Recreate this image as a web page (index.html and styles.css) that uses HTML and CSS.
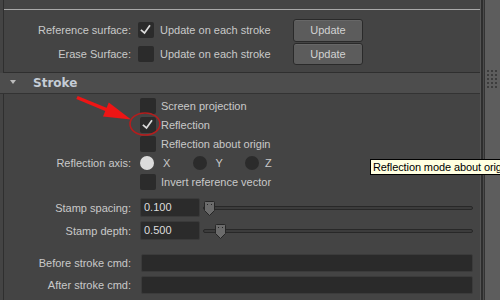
FILE: index.html
```html
<!DOCTYPE html>
<html>
<head>
<meta charset="utf-8">
<link rel="stylesheet" href="styles.css">
</head>
<body>
<div class="window">
  <div class="main">
    <section class="frame top-frame">
      <div class="sep"></div>
      <div class="row top-row">
        <span class="lbl">Reference surface:</span>
        <span class="cb checked"><svg viewBox="0 0 16 16" class="tick"><polyline points="3.5,8.5 6.5,11 11.5,4"/></svg></span>
        <span class="cb-text wide">Update on each stroke</span>
        <button class="btn">Update</button>
      </div>
      <div class="row top-row">
        <span class="lbl">Erase Surface:</span>
        <span class="cb"></span>
        <span class="cb-text wide">Update on each stroke</span>
        <button class="btn">Update</button>
      </div>
    </section>

    <header class="sec-head">
      <span class="tri"></span>
      <span class="sec-title">Stroke</span>
    </header>

    <section class="frame stroke-frame">
      <div class="row r19">
        <span class="lbl"></span>
        <span class="cb"></span>
        <span class="cb-text">Screen projection</span>
      </div>
      <div class="row r19">
        <span class="lbl"></span>
        <span class="cb checked"><svg viewBox="0 0 16 16" class="tick"><polyline points="3.5,8.5 6.5,11 11.5,4"/></svg></span>
        <span class="cb-text">Reflection</span>
      </div>
      <div class="row r19">
        <span class="lbl"></span>
        <span class="cb"></span>
        <span class="cb-text">Reflection about origin</span>
      </div>
      <div class="row r19">
        <span class="lbl">Reflection axis:</span>
        <span class="radio-item"><span class="radio on"></span><span class="radio-text">X</span></span>
        <span class="radio-item"><span class="radio"></span><span class="radio-text">Y</span></span>
        <span class="radio-item"><span class="radio"></span><span class="radio-text z">Z</span></span>
      </div>
      <div class="row r20">
        <span class="lbl"></span>
        <span class="cb"></span>
        <span class="cb-text">Invert reference vector</span>
      </div>

      <div class="row r21 stamp-first">
        <span class="lbl">Stamp spacing:</span>
        <span class="num">0.100</span>
        <span class="slider"><span class="track"></span><svg class="handle" style="left:1px" viewBox="0 0 11 15"><path d="M1.5,0.5 H9.5 Q10.5,0.5 10.5,1.5 V9.5 L5.5,14.5 L0.5,9.5 V1.5 Q0.5,0.5 1.5,0.5 Z"/><rect x="3" y="3" width="1" height="1" class="dot"/><rect x="7" y="3" width="1" height="1" class="dot"/></svg></span>
      </div>
      <div class="row r21 stamp-second">
        <span class="lbl">Stamp depth:</span>
        <span class="num">0.500</span>
        <span class="slider"><span class="track"></span><svg class="handle" style="left:12px" viewBox="0 0 11 15"><path d="M1.5,0.5 H9.5 Q10.5,0.5 10.5,1.5 V9.5 L5.5,14.5 L0.5,9.5 V1.5 Q0.5,0.5 1.5,0.5 Z"/><rect x="3" y="3" width="1" height="1" class="dot"/><rect x="7" y="3" width="1" height="1" class="dot"/></svg></span>
      </div>

      <div class="row r22 cmd-first">
        <span class="lbl">Before stroke cmd:</span>
        <span class="cmd"></span>
      </div>
      <div class="row r22">
        <span class="lbl">After stroke cmd:</span>
        <span class="cmd"></span>
      </div>
    </section>
  </div>
  <div class="gutter"></div>
  <div class="scrollbar">
    <div class="grip">
      <i></i><i></i><i></i><i></i><i></i><i></i><i></i><i></i><i></i><i></i><i></i><i></i><i></i><i></i><i></i>
    </div>
  </div>

  <div class="tooltip">Reflection mode about origin</div>

  <svg class="annot" viewBox="0 0 500 300" width="500" height="300">
    <line x1="77" y1="97.5" x2="107" y2="109.8" class="shaft"/>
    <polygon points="131,119.5 103,116.5 108.8,102.5" class="head"/>
    <ellipse cx="145" cy="124" rx="15" ry="11" class="ring"/>
  </svg>
</div>
</body>
</html>
```

FILE: styles.css
```css
* { box-sizing: border-box; }

html, body {
  margin: 0;
  padding: 0;
  background: #444444;
}

.window {
  position: relative;
  width: 500px;
  height: 300px;
  overflow: hidden;
  display: flex;
  font-family: "Liberation Sans", Arial, sans-serif;
  font-size: 11px;
  color: #c9c9c9;
  background: #444444;
}

.main {
  width: 480px;
  flex: none;
  display: flex;
  flex-direction: column;
}

.frame {
  margin-left: 3px;
  border-left: 1px solid #2f2f2f;
}

.top-frame {
  padding-top: 9px;
  padding-bottom: 6px;
  border-bottom: 1px solid #2f2f2f;
}

.sep {
  height: 1px;
  background: #a8a8a8;
  margin-bottom: 8px;
}

.row {
  display: flex;
  align-items: center;
}

.top-row { height: 24px; }
.r19 { height: 19px; }
.r20 { height: 20px; }
.r21 { height: 21px; }
.r22 { height: 22px; }

.stroke-frame { padding-top: 2px; flex: 1; }
.stamp-first { margin-top: 5px; }
.stamp-second { margin-top: 2px; }
.cmd-first { margin-top: 11px; }

.lbl {
  width: 127px;
  flex: none;
  text-align: right;
  margin-right: 9px;
  white-space: nowrap;
}

.top-row .lbl { margin-right: 7px; }

.cb {
  width: 16px;
  height: 16px;
  flex: none;
  background: #2b2b2b;
  border-radius: 2px;
  display: flex;
  align-items: center;
  justify-content: center;
}

.tick {
  width: 16px;
  height: 16px;
  fill: none;
  stroke: #dcdcdc;
  stroke-width: 1.7;
  stroke-linecap: square;
}

.cb-text {
  margin-left: 5px;
  white-space: nowrap;
}

.top-row .cb-text { margin-left: 6px; }

.cb-text.wide {
  width: 133px;
  flex: none;
}

.btn {
  width: 70px;
  height: 23px;
  margin: 0;
  padding: 0;
  font: inherit;
  color: #d2d2d2;
  background: #5c5c5c;
  border: 1px solid #2a2a2a;
  border-radius: 3px;
  box-shadow: inset 0 1px 0 #676767;
}

.top-row + .top-row .btn { height: 22px; }

.sec-head {
  height: 21px;
  display: flex;
  align-items: center;
  background: #4d4d4d;
  border-bottom: 1px solid #333333;
  padding-left: 10px;
}

.tri {
  width: 0;
  height: 0;
  border-left: 3.5px solid transparent;
  border-right: 3.5px solid transparent;
  border-top: 4px solid #bcbcbc;
  margin-right: 17px;
  margin-top: -3px;
}

.sec-title {
  font-family: "DejaVu Sans", sans-serif;
  font-weight: bold;
  font-size: 12px;
  color: #c4ccd6;
}

.radio-item {
  display: flex;
  align-items: center;
  width: 52.5px;
  flex: none;
}

.radio {
  width: 14px;
  height: 14px;
  border-radius: 50%;
  background: #2b2b2b;
  flex: none;
}

.radio.on { background: #dcdcdc; }

.radio-text { margin-left: 9px; }
.radio-text.z { margin-left: 6px; }

.num {
  width: 60px;
  height: 19px;
  flex: none;
  background: #2b2b2b;
  border: 1px solid #3a3a3a;
  border-radius: 2px;
  color: #dddddd;
  padding-left: 3px;
  line-height: 17px;
}

.slider {
  position: relative;
  width: 270px;
  height: 17px;
  margin-left: 3px;
  display: flex;
  align-items: center;
}

.track {
  width: 100%;
  height: 4px;
  background: #3c3c3c;
  border: 1px solid #282828;
  border-radius: 2px;
}

.handle {
  position: absolute;
  top: 2px;
  width: 11px;
  height: 15px;
}

.handle path {
  fill: #6b6b6b;
  stroke: #262626;
  stroke-width: 1;
}

.handle .dot { fill: #262626; }

.cmd {
  width: 332px;
  height: 18px;
  flex: none;
  margin-left: 1px;
  background: #2a2a2a;
  border: 1px solid #3b3b3b;
  border-radius: 2px;
}

.gutter {
  width: 5px;
  flex: none;
  background: linear-gradient(to right, #555555 0 1px, #2e2e2e 1px 3px, #4b4b4b 3px 4px, #333333 4px 5px);
}

.scrollbar {
  flex: 1;
  background: #5d5d5d;
  padding-top: 70px;
  padding-left: 2px;
}

.grip {
  display: grid;
  grid-template-columns: repeat(3, 2px);
  grid-auto-rows: 2px;
  column-gap: 2px;
  row-gap: 2px;
}

.grip i {
  display: block;
  background: #3c3c3c;
}

.tooltip {
  position: absolute;
  left: 370px;
  top: 159px;
  height: 16px;
  padding: 0 3px 0 2px;
  white-space: nowrap;
  background: #ffffe1;
  border: 1px solid #000000;
  color: #000000;
  font-size: 11px;
  letter-spacing: -0.1px;
  line-height: 14px;
}

.annot {
  position: absolute;
  left: 0;
  top: 0;
  pointer-events: none;
}

.shaft {
  stroke: #ee1515;
  stroke-width: 3.5;
}

.head { fill: #ee1515; }

.ring {
  fill: none;
  stroke: #b51d1d;
  stroke-width: 1.6;
}
```
